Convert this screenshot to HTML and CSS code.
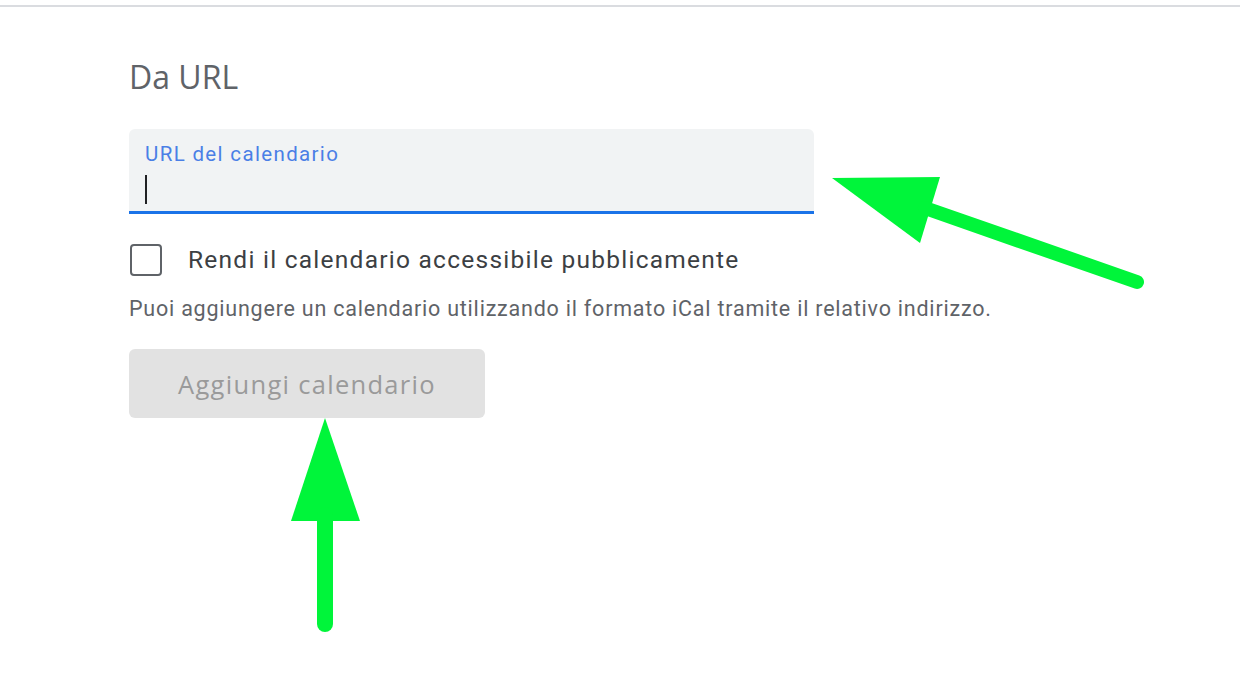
FILE: index.html
```html
<!DOCTYPE html>
<html lang="it">
<head>
<meta charset="utf-8">
<title>Da URL</title>
<link rel="stylesheet" href="styles.css">
</head>
<body>
<div class="topbar"></div>
<main class="content">
  <h2 class="heading">Da URL</h2>
  <div class="field">
    <label class="field-label">URL del calendario</label>
    <div class="field-input"><span class="caret"></span></div>
  </div>
  <div class="check-row">
    <span class="checkbox"></span>
    <span class="check-label">Rendi il calendario accessibile pubblicamente</span>
  </div>
  <p class="helper">Puoi aggiungere un calendario utilizzando il formato iCal tramite il relativo indirizzo.</p>
  <button class="add-btn" type="button">Aggiungi calendario</button>
</main>
<svg class="arrows" width="1240" height="690" viewBox="0 0 1240 690" xmlns="http://www.w3.org/2000/svg">
  <polygon points="832,178 940,177 920,243" fill="#00f53a"/>
  <line x1="925" y1="208" x2="1137" y2="282" stroke="#00f53a" stroke-width="14" stroke-linecap="round"/>
  <polygon points="325,418 360,521 291,521" fill="#00f53a"/>
  <line x1="325" y1="515" x2="325" y2="624" stroke="#00f53a" stroke-width="16" stroke-linecap="round"/>
</svg>
</body>
</html>
```
FILE: styles.css
```css
html, body {
  margin: 0;
  padding: 0;
  background: #ffffff;
}
body {
  font-family: Roboto, "Liberation Sans", Arial, sans-serif;
  width: 1240px;
  height: 690px;
  overflow: hidden;
  position: relative;
}
.topbar {
  height: 5px;
  border-bottom: 2px solid #dadce0;
}
.content {
  padding-left: 129px;
  display: flex;
  flex-direction: column;
  align-items: flex-start;
}
.heading {
  margin: 50px 0 0 0;
  font-family: "Open Sans", Roboto, sans-serif;
  font-weight: 400;
  font-size: 32px;
  line-height: 40px;
  color: #5f6368;
  letter-spacing: 0;
}
.field {
  margin-top: 32px;
  width: 685px;
  height: 85px;
  background: #f1f3f4;
  border-radius: 6px 6px 0 0;
  border-bottom: 3px solid #1a73e8;
  display: flex;
  flex-direction: column;
  padding: 0 0 0 16px;
  box-sizing: border-box;
}
.field-label {
  margin-top: 12px;
  font-size: 20.5px;
  line-height: 26px;
  letter-spacing: 1.35px;
  color: #4a7fe6;
}
.field-input {
  margin-top: 8px;
  height: 28px;
}
.caret {
  display: block;
  width: 2px;
  height: 29px;
  background: #202124;
}
.check-row {
  margin-top: 30px;
  display: flex;
  align-items: center;
  gap: 26px;
}
.checkbox {
  width: 28px;
  height: 28px;
  border: 2px solid #5f6368;
  border-radius: 4px;
  margin-left: 1px;
}
.check-label {
  font-size: 24.5px;
  line-height: 32px;
  letter-spacing: 1.25px;
  color: #3c4043;
}
.helper {
  margin: 19px 0 0 0;
  font-size: 21.5px;
  line-height: 28px;
  letter-spacing: 0.78px;
  color: #5f6368;
}
.add-btn {
  margin-top: 26px;
  width: 356px;
  height: 69px;
  border: none;
  border-radius: 6px;
  background: #e2e2e2;
  color: #9a9a9a;
  font-family: "Open Sans", Roboto, sans-serif;
  font-size: 25.5px;
  letter-spacing: 1.3px;
  padding: 0;
  cursor: default;
}
.arrows {
  position: absolute;
  left: 0;
  top: 0;
  pointer-events: none;
}
```
